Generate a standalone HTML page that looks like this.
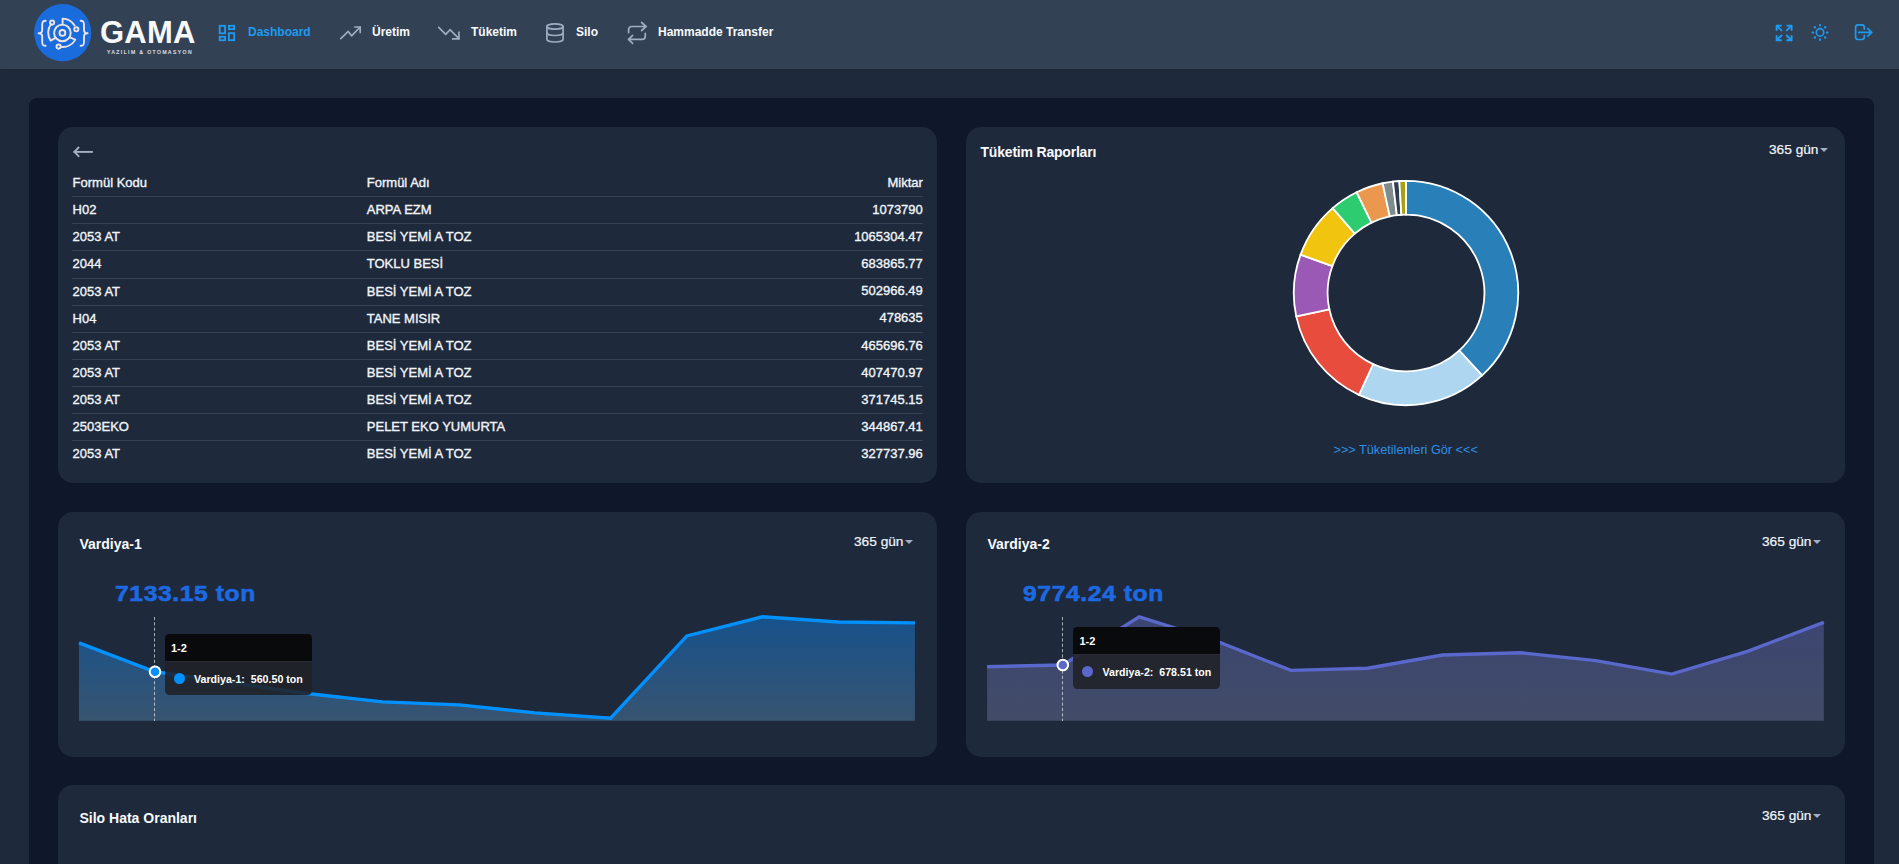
<!DOCTYPE html>
<html><head><meta charset="utf-8">
<style>
*{box-sizing:border-box;margin:0;padding:0}
html,body{width:1899px;height:864px;overflow:hidden;background:#1e293b;font-family:"Liberation Sans",sans-serif;color:#f1f5f9}
.abs{position:absolute}
#hdr{position:absolute;left:0;top:0;width:1899px;height:69px;background:#334155;box-shadow:0 1px 2px rgba(0,0,0,.08)}
.nav{position:absolute;top:24px;font-size:12px;font-weight:bold;color:#f8fafc;white-space:nowrap;line-height:16px}
#cont{position:absolute;left:29px;top:98px;width:1845px;height:900px;background:#0f172a;border-radius:8px}
.card{position:absolute;background:#1e293b;border-radius:15px}
.t{position:absolute;white-space:nowrap}
.tt{position:absolute;white-space:nowrap;font-size:13px;line-height:13px;color:#f1f5f9;-webkit-text-stroke:0.35px #f1f5f9}
.tt.r{right:976.2px;text-align:right}
.tl{position:absolute;left:72px;width:851px;height:1px;background:#374151}
.ttl{position:absolute;white-space:nowrap;font-size:14px;line-height:16px;font-weight:bold;color:#f8fafc}
.gun{position:absolute;white-space:nowrap;font-size:13.7px;line-height:16px;color:#f1f5f9;-webkit-text-stroke:0.2px #f1f5f9}
.car{display:inline-block;width:0;height:0;border-left:4px solid transparent;border-right:4px solid transparent;border-top:4.5px solid #a0aec6;margin-left:1.5px;vertical-align:2px}
.tip{position:absolute;background:rgba(32,33,37,0.88);border-radius:4.5px;overflow:hidden}
.tiph{background:rgba(8,9,11,0.97);border-bottom:1px solid #2a2c30}
.tipt{position:absolute;white-space:nowrap;font-size:11px;line-height:13px;font-weight:bold;color:#fff}
.tipt.b{font-size:10.65px}
.big{position:absolute;top:580.5px;white-space:nowrap;font-size:22.5px;line-height:26px;font-weight:bold;color:#1d69e2;letter-spacing:0.5px;-webkit-text-stroke:0.6px #1d69e2;transform:scaleX(1.1);transform-origin:0 0}
</style></head><body>
<div id="hdr">
  <svg class="abs" style="left:0;top:0" width="1899" height="69" viewBox="0 0 1899 69">
    <!-- logo -->
    <circle cx="62.7" cy="32.7" r="28.6" fill="#1a6cdc"/>
    <g fill="none" stroke="#ece4e2" stroke-width="1.9" stroke-linecap="round" stroke-linejoin="round">
      <path d="M45.6 20.8 C42.4 20.8 42.2 22.6 42.2 25 L42.2 30 C42.2 32 41 33.3 38.6 33.3 C41 33.3 42.2 34.6 42.2 36.6 L42.2 41.8 C42.2 44.2 42.4 45.8 45.6 45.8"/>
      <path d="M80.6 20.8 C83.8 20.8 84 22.6 84 25 L84 30 C84 32 85.2 33.3 87.6 33.3 C85.2 33.3 84 34.6 84 36.6 L84 41.8 C84 44.2 83.8 45.8 80.6 45.8"/>
      <circle cx="62.4" cy="32.9" r="2.9"/>
      <circle cx="62.4" cy="32.9" r="8.3"/>
      <path d="M62.6 24.6 L62.6 18.6 A14.3 14.3 0 0 1 74.6 25.6"/>
      <circle cx="76.3" cy="29.3" r="2.1"/>
      <path d="M50.9 24.2 A14.3 14.3 0 0 0 50.6 40.6 L55.6 37.8"/>
      <circle cx="52.1" cy="22.6" r="2.1"/>
      <path d="M69.8 37.3 L75.3 39.6 A14.3 14.3 0 0 1 60.8 46.8"/>
      <circle cx="58.6" cy="46.6" r="2.1"/>
    </g>
    <!-- dashboard icon -->
    <g fill="none" stroke="#1d9bf0" stroke-width="1.8">
      <rect x="219.7" y="25.8" width="5.4" height="7.5"/>
      <rect x="219.7" y="36.8" width="5.4" height="3.4"/>
      <rect x="228.9" y="25.8" width="5.3" height="3.3"/>
      <rect x="228.9" y="33.2" width="5.3" height="7"/>
    </g>
    <g fill="none" stroke="#9fadc2" stroke-width="1.7" stroke-linecap="round" stroke-linejoin="round">
      <!-- trending up -->
      <path d="M340.8 38.6 L348.2 31.4 L351.6 35.8 L360.2 27"/>
      <path d="M354.9 27 L360.2 27 L360.2 32.5"/>
      <!-- trending down -->
      <path d="M438.7 27.3 L445.7 34.4 L450 29.7 L458.9 38.6"/>
      <path d="M458.9 32.2 L458.9 38.9 L452.6 38.9"/>
      <!-- database -->
      <ellipse cx="555" cy="26.5" rx="8.1" ry="2.7"/>
      <path d="M546.9 26.5 L546.9 39.3 A8.1 2.7 0 0 0 563.1 39.3 L563.1 26.5"/>
      <path d="M546.9 32.8 A8.1 2.7 0 0 0 563.1 32.8"/>
      <!-- repeat -->
      <path d="M628.6 32.6 L628.6 29.6 A3.1 3.1 0 0 1 631.7 26.5 L646 26.5"/>
      <path d="M641.6 22.5 L646 26.5 L641.6 30.5"/>
      <path d="M645.3 33.3 L645.3 36.3 A3.1 3.1 0 0 1 642.2 39.4 L628.6 39.4"/>
      <path d="M632.6 35.4 L628.6 39.4 L632.6 43.4"/>
    </g>
    <g fill="none" stroke="#1d9bf0" stroke-width="1.9" stroke-linecap="round" stroke-linejoin="round">
      <!-- fullscreen -->
      <path d="M1781 25.6 L1776.6 25.6 L1776.6 30 M1776.6 25.6 L1781.4 30.4"/>
      <path d="M1787.2 25.6 L1791.6 25.6 L1791.6 30 M1791.6 25.6 L1786.8 30.4"/>
      <path d="M1781 40.3 L1776.6 40.3 L1776.6 35.9 M1776.6 40.3 L1781.4 35.5"/>
      <path d="M1787.2 40.3 L1791.6 40.3 L1791.6 35.9 M1791.6 40.3 L1786.8 35.5"/>
      <!-- sun -->
      <circle cx="1820" cy="32.4" r="3.7" stroke-width="1.7"/>
      <path stroke-width="2" d="M1820 24.9 L1820 25.5 M1820 39.3 L1820 39.9 M1812.5 32.4 L1813.2 32.4 M1826.8 32.4 L1827.5 32.4 M1814.6 27 L1815.1 27.5 M1825.4 27 L1824.9 27.5 M1814.6 37.8 L1815.1 37.3 M1825.4 37.8 L1824.9 37.3"/>
      <!-- logout -->
      <path stroke-width="1.7" d="M1864.3 29.1 L1864.3 27.4 A2.6 2.6 0 0 0 1861.7 24.8 L1858.2 24.8 A2.6 2.6 0 0 0 1855.6 27.4 L1855.6 36.9 A2.6 2.6 0 0 0 1858.2 39.5 L1861.7 39.5 A2.6 2.6 0 0 0 1864.3 36.9 L1864.3 35.4"/>
      <path stroke-width="1.7" d="M1858.6 32.4 L1871.8 32.4 M1867.8 28.6 L1871.8 32.4 L1867.8 36.2"/>
    </g>
  </svg>
  <div class="t" style="left:100px;top:14.5px;font-size:31px;font-weight:bold;color:#f8f8f8;letter-spacing:0.2px">GAMA</div>
  <div class="t" style="left:107px;top:49px;font-size:5px;font-weight:normal;color:#e5e7eb;letter-spacing:1.5px;-webkit-text-stroke:0.15px #e5e7eb">YAZILIM &amp; OTOMASYON</div>

  <div class="nav" style="left:248px;color:#1d9bf0">Dashboard</div>
  <div class="nav" style="left:372px">Üretim</div>
  <div class="nav" style="left:471px">Tüketim</div>
  <div class="nav" style="left:576px">Silo</div>
  <div class="nav" style="left:658px">Hammadde Transfer</div>
</div>

<div id="cont"></div>

<div class="card" style="left:58px;top:127px;width:879px;height:356px"></div>
<div class="card" style="left:966px;top:127px;width:879px;height:356px"></div>
<svg class="abs" style="left:66px;top:140px" width="34" height="25" viewBox="66 140 34 25"><g fill="none" stroke="#a3b0c6" stroke-width="1.9" stroke-linejoin="round"><path d="M74.4 151.9 L91.9 151.9" stroke-linecap="square"/><path d="M78.6 147.5 L74.4 151.9 L78.6 156.2" stroke-linecap="round"/></g></svg>
<div class="tt" style="top:176.1px;left:72.6px">Formül Kodu</div><div class="tt" style="top:176.1px;left:366.8px">Formül Adı</div><div class="tt r" style="top:176.1px">Miktar</div>
<div class="tl" style="top:196px"></div>
<div class="tt" style="top:202.8px;left:72.6px">H02</div><div class="tt" style="top:202.8px;left:366.8px">ARPA EZM</div><div class="tt r" style="top:202.9px">1073790</div>
<div class="tl" style="top:223px"></div>
<div class="tt" style="top:229.8px;left:72.6px">2053 AT</div><div class="tt" style="top:229.8px;left:366.8px">BESİ YEMİ A TOZ</div><div class="tt r" style="top:230.0px">1065304.47</div>
<div class="tl" style="top:250px"></div>
<div class="tt" style="top:256.8px;left:72.6px">2044</div><div class="tt" style="top:256.8px;left:366.8px">TOKLU BESİ</div><div class="tt r" style="top:257.1px">683865.77</div>
<div class="tl" style="top:278px"></div>
<div class="tt" style="top:284.8px;left:72.6px">2053 AT</div><div class="tt" style="top:284.8px;left:366.8px">BESİ YEMİ A TOZ</div><div class="tt r" style="top:284.3px">502966.49</div>
<div class="tl" style="top:305px"></div>
<div class="tt" style="top:311.8px;left:72.6px">H04</div><div class="tt" style="top:311.8px;left:366.8px">TANE MISIR</div><div class="tt r" style="top:311.4px">478635</div>
<div class="tl" style="top:332px"></div>
<div class="tt" style="top:338.8px;left:72.6px">2053 AT</div><div class="tt" style="top:338.8px;left:366.8px">BESİ YEMİ A TOZ</div><div class="tt r" style="top:338.5px">465696.76</div>
<div class="tl" style="top:359px"></div>
<div class="tt" style="top:365.8px;left:72.6px">2053 AT</div><div class="tt" style="top:365.8px;left:366.8px">BESİ YEMİ A TOZ</div><div class="tt r" style="top:365.6px">407470.97</div>
<div class="tl" style="top:386px"></div>
<div class="tt" style="top:392.8px;left:72.6px">2053 AT</div><div class="tt" style="top:392.8px;left:366.8px">BESİ YEMİ A TOZ</div><div class="tt r" style="top:392.7px">371745.15</div>
<div class="tl" style="top:413px"></div>
<div class="tt" style="top:419.8px;left:72.6px">2503EKO</div><div class="tt" style="top:419.8px;left:366.8px">PELET EKO YUMURTA</div><div class="tt r" style="top:419.9px">344867.41</div>
<div class="tl" style="top:440px"></div>
<div class="tt" style="top:446.8px;left:72.6px">2053 AT</div><div class="tt" style="top:446.8px;left:366.8px">BESİ YEMİ A TOZ</div><div class="tt r" style="top:447.0px">327737.96</div>

<div class="ttl" style="left:980.5px;top:143.5px;font-size:14px;letter-spacing:-0.2px">Tüketim Raporları</div>
<div class="gun" style="left:1769px;top:141.5px">365 gün<span class="car"></span></div>
<svg class="abs" style="left:1286px;top:172px" width="240" height="242" viewBox="1286 172 240 242"><g stroke="#fff" stroke-width="1.8" stroke-linejoin="miter"><path d="M1406.00 180.80 A112.2 112.2 0 0 1 1482.09 375.46 L1459.17 350.62 A78.4 78.4 0 0 0 1406.00 214.60 Z" fill="#2980b9"/><path d="M1482.09 375.46 A112.2 112.2 0 0 1 1358.94 394.85 L1373.11 364.17 A78.4 78.4 0 0 0 1459.17 350.62 Z" fill="#aed6f1"/><path d="M1358.94 394.85 A112.2 112.2 0 0 1 1296.25 316.33 L1329.31 309.30 A78.4 78.4 0 0 0 1373.11 364.17 Z" fill="#e74c3c"/><path d="M1296.25 316.33 A112.2 112.2 0 0 1 1300.57 254.63 L1332.33 266.19 A78.4 78.4 0 0 0 1329.31 309.30 Z" fill="#9b59b6"/><path d="M1300.57 254.63 A112.2 112.2 0 0 1 1332.69 208.07 L1354.77 233.65 A78.4 78.4 0 0 0 1332.33 266.19 Z" fill="#f1c40f"/><path d="M1332.69 208.07 A112.2 112.2 0 0 1 1356.64 192.24 L1371.51 222.59 A78.4 78.4 0 0 0 1354.77 233.65 Z" fill="#2ecc71"/><path d="M1356.64 192.24 A112.2 112.2 0 0 1 1382.67 183.25 L1389.70 216.31 A78.4 78.4 0 0 0 1371.51 222.59 Z" fill="#eb984e"/><path d="M1382.67 183.25 A112.2 112.2 0 0 1 1392.91 181.57 L1396.85 215.14 A78.4 78.4 0 0 0 1389.70 216.31 Z" fill="#7f8c8d"/><path d="M1392.91 181.57 A112.2 112.2 0 0 1 1399.35 181.00 L1401.35 214.74 A78.4 78.4 0 0 0 1396.85 215.14 Z" fill="#2c3e50"/><path d="M1399.35 181.00 A112.2 112.2 0 0 1 1406.00 180.80 L1406.00 214.60 A78.4 78.4 0 0 0 1401.35 214.74 Z" fill="#a89f14"/></g></svg>
<div class="t" style="left:1333.5px;top:442.5px;font-size:12.7px;line-height:14px;color:#2f8fe3">&gt;&gt;&gt; Tüketilenleri Gör &lt;&lt;&lt;</div>

<div class="card" style="left:58px;top:512px;width:879px;height:245px"></div>
<div class="card" style="left:966px;top:512px;width:879px;height:245px"></div>
<div class="card" style="left:58px;top:785px;width:1787px;height:200px"></div>


<div class="ttl" style="left:79.5px;top:535.5px">Vardiya-1</div>
<div class="gun" style="left:854px;top:533.5px">365 gün<span class="car"></span></div>
<svg class="abs" style="left:69px;top:600px" width="856" height="130" viewBox="69 600 856 130">
<defs><linearGradient id="g1" x1="0" y1="616" x2="0" y2="721" gradientUnits="userSpaceOnUse"><stop offset="0" stop-color="#16528c"/><stop offset="1" stop-color="#385470"/></linearGradient></defs>
<path d="M79.0 720.7 L79.0 642.9 L155.0 671.8 L231.0 682.6 L307.0 693.5 L382.6 701.9 L459.3 704.9 L535.1 712.9 L610.6 718.2 L686.9 635.9 L762.5 616.8 L838.0 622.0 L914.9 622.9 L914.9 720.7 Z" fill="url(#g1)"/>
<polyline points="79.0,642.9 155.0,671.8 231.0,682.6 307.0,693.5 382.6,701.9 459.3,704.9 535.1,712.9 610.6,718.2 686.9,635.9 762.5,616.8 838.0,622.0 914.9,622.9" fill="none" stroke="#0091ff" stroke-width="3.4" stroke-linejoin="miter"/>
<line x1="154.5" y1="617" x2="154.5" y2="721" stroke="rgba(255,255,255,0.62)" stroke-width="1" stroke-dasharray="3.1 2.25"/>
<circle cx="155.0" cy="671.8" r="5.3" fill="#0091ff" stroke="#fff" stroke-width="2"/>
</svg>
<div class="tip" style="left:165px;top:634px;width:147px;height:61px"><div class="tiph" style="height:28px"></div></div>
<div class="tipt" style="left:171px;top:641.5px">1-2</div>
<div class="abs" style="left:173.8px;top:672.6px;width:11.2px;height:11.2px;border-radius:50%;background:#0091ff"></div>
<div class="tipt b" style="left:194px;top:672.5px">Vardiya-1:&nbsp; 560.50 ton</div>
<div class="big" style="left:115px">7133.15 ton</div>

<div class="ttl" style="left:987.5px;top:535.5px">Vardiya-2</div>
<div class="gun" style="left:1762px;top:533.5px">365 gün<span class="car"></span></div>
<svg class="abs" style="left:977px;top:600px" width="857" height="130" viewBox="977 600 857 130">
<defs><linearGradient id="g2" x1="0" y1="616" x2="0" y2="721" gradientUnits="userSpaceOnUse"><stop offset="0" stop-color="#3b4572"/><stop offset="1" stop-color="#424c67"/></linearGradient></defs>
<path d="M987.1 720.7 L987.1 666.7 L1062.8 665.0 L1139.2 616.9 L1215.0 640.5 L1290.9 670.4 L1367.6 668.2 L1442.6 655.0 L1520.1 652.7 L1595.8 660.6 L1671.7 674.1 L1747.5 651.3 L1823.8 622.4 L1823.8 720.7 Z" fill="url(#g2)"/>
<polyline points="987.1,666.7 1062.8,665.0 1139.2,616.9 1215.0,640.5 1290.9,670.4 1367.6,668.2 1442.6,655.0 1520.1,652.7 1595.8,660.6 1671.7,674.1 1747.5,651.3 1823.8,622.4" fill="none" stroke="#5a68cc" stroke-width="3.4" stroke-linejoin="miter"/>
<line x1="1062.5" y1="617" x2="1062.5" y2="721" stroke="rgba(255,255,255,0.62)" stroke-width="1" stroke-dasharray="3.1 2.25"/>
<circle cx="1062.8" cy="665.0" r="5.3" fill="#5a68cc" stroke="#fff" stroke-width="2"/>
</svg>
<div class="tip" style="left:1073px;top:627px;width:147px;height:62px"><div class="tiph" style="height:28px"></div></div>
<div class="tipt" style="left:1079.5px;top:634.5px">1-2</div>
<div class="abs" style="left:1081.8px;top:665.6px;width:11.2px;height:11.2px;border-radius:50%;background:#5a68cc"></div>
<div class="tipt b" style="left:1102.5px;top:666px">Vardiya-2:&nbsp; 678.51 ton</div>
<div class="big" style="left:1023px">9774.24 ton</div>

<div class="ttl" style="left:79.5px;top:809.5px">Silo Hata Oranları</div>
<div class="gun" style="left:1762px;top:807.5px">365 gün<span class="car"></span></div>

</body></html>
